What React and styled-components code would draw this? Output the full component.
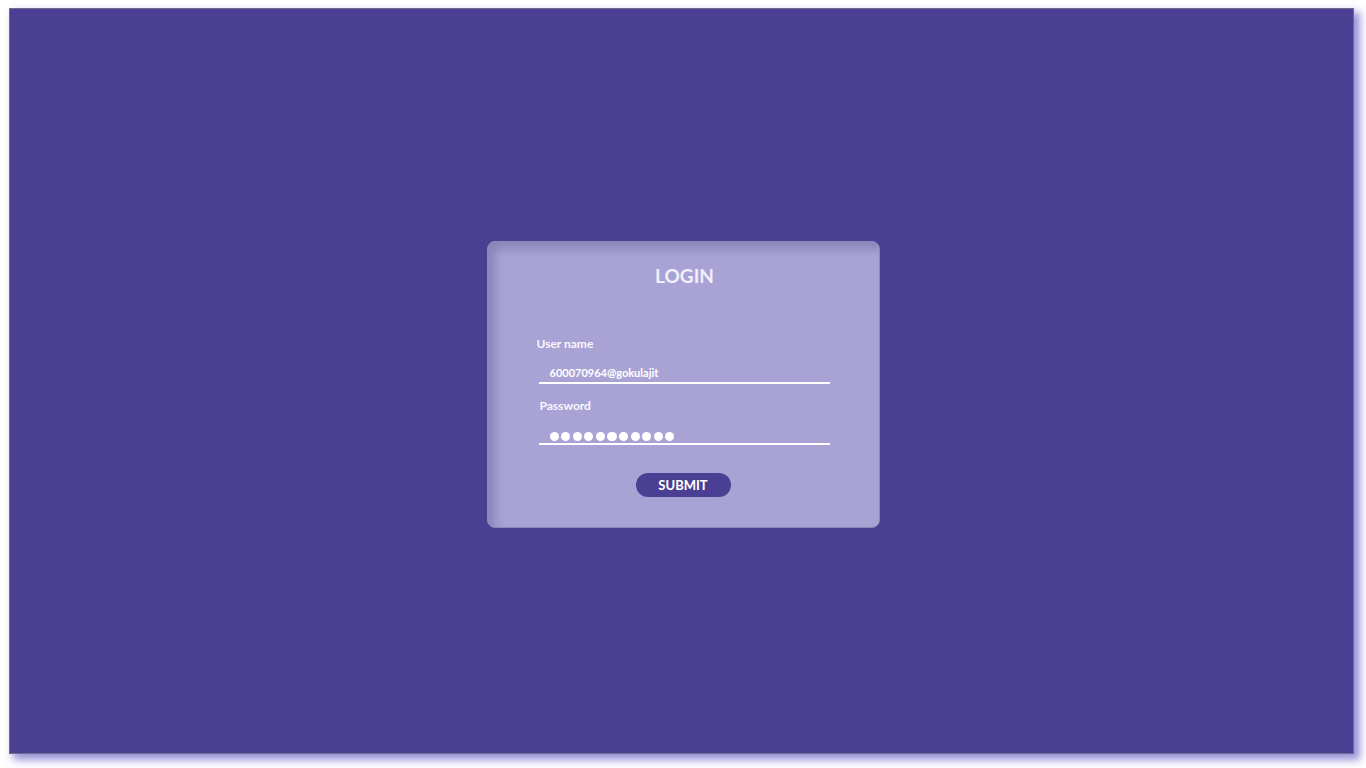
import React from 'react';
import styled, { createGlobalStyle } from 'styled-components';

const GlobalStyle = createGlobalStyle`
    body {
        margin: 0;
        background: #ffffff;
        font-family: Lato, "Open Sans", sans-serif;
    }
`;

// Белое поле вокруг фона (тень должна поместиться внутри)
const Page = styled.div`
    box-sizing: border-box;
    width: 1366px;
    height: 768px;
    padding: 8px 0 0 9px;
    background: #ffffff;
`;

// Фон страницы
const Frame = styled.div`
    box-sizing: border-box;
    width: 1345px;
    height: 746px;
    background-color: #4b3f93;
    border: 1px solid #6f6a86;
    box-shadow: 5px 5px 8px 1px rgba(110, 98, 200, 0.7);
    display: flex;
    align-items: center;
    justify-content: center;
    padding-top: 6px;
    padding-left: 3px;
`;

// Карточка логина
const Card = styled.form`
    box-sizing: border-box;
    width: 393px;
    height: 287px;
    background-color: #a9a3d5;
    border: 1px solid #8e89b3;
    border-radius: 8px;
    box-shadow: inset 7px 7px 10px rgba(40, 30, 90, 0.22);
    padding: 22px 48px 0 51px;
    display: flex;
    flex-direction: column;
    color: #f7f6fc;
`;

const Title = styled.h2`
    margin: 0 0 49px 0;
    font-size: 19px;
    line-height: 23px;
    font-weight: 700;
    text-align: center;
    color: #f1effa;
`;

const Label = styled.label`
    display: block;
    margin-left: ${props => props.shift || 0}px;
    font-size: 12px;
    line-height: 15px;
    font-weight: 700;
    color: #f8f7fd;
`;

const Input = styled.div`
    box-sizing: border-box;
    width: 291px;
    padding: ${props => props.dots ? '19px 0 2px 11px' : '14px 0 2px 11px'};
    border-bottom: 2px solid #ffffff;
    margin-bottom: ${props => props.last ? '28px' : '14px'};
    font-size: 11px;
    line-height: 15px;
    font-weight: 700;
    color: #ffffff;
    display: flex;
    gap: 2.4px;
`;

const Dot = styled.span`
    width: 9.2px;
    height: 9.2px;
    border-radius: 50%;
    background-color: #ffffff;
`;

const Submit = styled.button`
    align-self: center;
    margin-left: -3px;
    width: 95px;
    height: 24px;
    border: none;
    border-radius: 12px;
    background-color: #4b3f93;
    color: #ffffff;
    font-family: Lato, sans-serif;
    font-size: 13px;
    font-weight: 700;
    cursor: pointer;
`;

const App = () => {
    const dots = [...Array(11)];
    return (
        <Page>
            <GlobalStyle />
            <Frame>
                <Card onSubmit={e => e.preventDefault()}>
                    <Title>LOGIN</Title>
                    <Label shift={-2}>User name</Label>
                    <Input>600070964@gokulajit</Input>
                    <Label shift={1}>Password</Label>
                    <Input dots last>
                        {dots.map((_, i) => <Dot key={i} />)}
                    </Input>
                    <Submit type="submit">SUBMIT</Submit>
                </Card>
            </Frame>
        </Page>
    );
};

export default App;
